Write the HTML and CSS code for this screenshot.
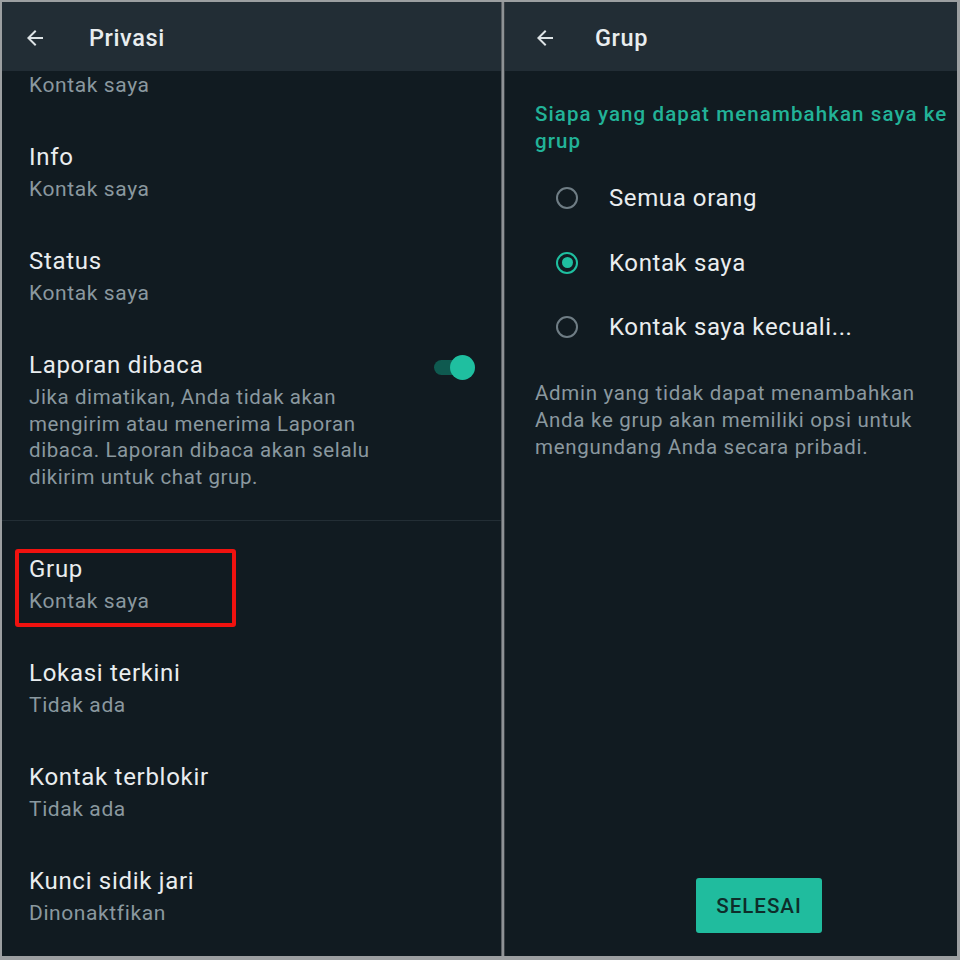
FILE: index.html
```html
<!DOCTYPE html>
<html lang="id">
<head>
    <meta charset="UTF-8">
    <meta name="viewport" content="width=device-width, initial-scale=1.0">
    <title>Privasi - Grup</title>
    <link rel="stylesheet" href="styles.css">
</head>
<body>
    <div class="frame">
        <!-- left screen: privacy list -->
        <section class="screen screen-left">
            <header class="app-bar">
                <svg class="back" viewBox="0 0 24 24" width="24" height="24"><path d="M20 11H7.83l5.59-5.59L12 4l-8 8 8 8 1.41-1.41L7.83 13H20v-2z"/></svg>
                <span class="app-title">Privasi</span>
            </header>
            <div class="list">
                <div class="item item-cut">
                    <div class="sub">Kontak saya</div>
                </div>
                <div class="item">
                    <div class="title">Info</div>
                    <div class="sub">Kontak saya</div>
                </div>
                <div class="item">
                    <div class="title">Status</div>
                    <div class="sub">Kontak saya</div>
                </div>
                <div class="item item-toggle">
                    <div class="item-text">
                        <div class="title">Laporan dibaca</div>
                        <div class="desc">Jika dimatikan, Anda tidak akan mengirim atau menerima Laporan dibaca. Laporan dibaca akan selalu dikirim untuk chat grup.</div>
                    </div>
                    <div class="switch"><span class="thumb"></span></div>
                </div>
                <div class="divider"></div>
                <div class="item item-first">
                    <div class="title">Grup</div>
                    <div class="sub">Kontak saya</div>
                    <div class="highlight"></div>
                </div>
                <div class="item">
                    <div class="title">Lokasi terkini</div>
                    <div class="sub">Tidak ada</div>
                </div>
                <div class="item">
                    <div class="title">Kontak terblokir</div>
                    <div class="sub">Tidak ada</div>
                </div>
                <div class="item">
                    <div class="title">Kunci sidik jari</div>
                    <div class="sub">Dinonaktfikan</div>
                </div>
            </div>
        </section>

        <div class="split"></div>

        <!-- right screen: group setting -->
        <section class="screen screen-right">
            <header class="app-bar">
                <svg class="back" viewBox="0 0 24 24" width="24" height="24"><path d="M20 11H7.83l5.59-5.59L12 4l-8 8 8 8 1.41-1.41L7.83 13H20v-2z"/></svg>
                <span class="app-title">Grup</span>
            </header>
            <div class="pane">
                <h2 class="question">Siapa yang dapat menambahkan saya ke grup</h2>
                <div class="options">
                    <div class="option"><span class="radio"></span>Semua orang</div>
                    <div class="option"><span class="radio checked"></span>Kontak saya</div>
                    <div class="option"><span class="radio"></span>Kontak saya kecuali...</div>
                </div>
                <p class="note">Admin yang tidak dapat menambahkan Anda ke grup akan memiliki opsi untuk mengundang Anda secara pribadi.</p>
                <div class="spacer"></div>
                <button class="done">SELESAI</button>
            </div>
        </section>
    </div>
</body>
</html>
```

FILE: styles.css
```css
* {
    box-sizing: border-box;
}

body {
    margin: 0;
    width: 960px;
    height: 960px;
    background: #9c9fa1;
    font-family: Roboto, 'Noto Sans', sans-serif;
    overflow: hidden;
}

.frame {
    display: flex;
    padding: 2px 3px 4px 2px;
    height: 960px;
}

.screen {
    display: flex;
    flex-direction: column;
    background: #111b21;
    height: 100%;
    overflow: hidden;
}

.screen-left {
    width: 499px;
}

.screen-right {
    flex: 1;
}

.split {
    width: 4px;
    background: #8e9295;
    border-left: 1px solid #5c6166;
    border-right: 1px solid #3a4045;
}

.app-bar {
    height: 69px;
    flex-shrink: 0;
    display: flex;
    align-items: center;
    background: #222d35;
    padding-left: 21px;
}

.back {
    fill: #dde3e6;
    margin-top: 2px;
}

.app-title {
    margin-left: 42px;
    font-size: 23.5px;
    font-weight: 500;
    letter-spacing: 0.6px;
    color: #e9edef;
    margin-top: 2px;
}

.screen-right .app-bar {
    padding-left: 28px;
}

.screen-right .app-title {
    margin-left: 38px;
}

/* left list */
.list {
    display: flex;
    flex-direction: column;
}

.item {
    position: relative;
    padding: 20px 28px 20px 27px;
}

.item-cut {
    padding-top: 0;
    padding-bottom: 22px;
}

.item-cut .sub {
    line-height: 28px;
}

.title {
    font-size: 24px;
    line-height: 32px;
    letter-spacing: 0.7px;
    color: #e9edef;
}

.sub {
    font-size: 21px;
    line-height: 32px;
    letter-spacing: 0.6px;
    color: #8a989f;
}

.item-toggle {
    display: flex;
    align-items: flex-start;
    gap: 30px;
    padding-bottom: 29px;
}

.item-text {
    flex: 1;
}

.desc {
    margin-top: 3px;
    font-size: 20.5px;
    line-height: 26.7px;
    letter-spacing: 0.6px;
    color: #8a989f;
}

.switch {
    position: relative;
    width: 38px;
    height: 15px;
    margin-top: 11px;
    margin-right: 1px;
    border-radius: 8px;
    background: #0f5a50;
}

.thumb {
    position: absolute;
    right: -3px;
    top: -5px;
    width: 25px;
    height: 25px;
    border-radius: 50%;
    background: #1fbfa0;
}

.divider {
    height: 1px;
    background: #232e35;
}

.item-first {
    padding-top: 32px;
}

.highlight {
    position: absolute;
    left: 13px;
    top: 28px;
    width: 221px;
    height: 78px;
    border: 4px solid #f0120f;
    border-radius: 3px;
}

/* right pane */
.pane {
    flex: 1;
    display: flex;
    flex-direction: column;
    padding: 30px 0 23px 30px;
}

.question {
    margin: 0;
    font-size: 20.5px;
    font-weight: 500;
    line-height: 27px;
    letter-spacing: 1.1px;
    color: #22b398;
}

.options {
    margin-top: 11px;
    display: flex;
    flex-direction: column;
}

.option {
    height: 64.5px;
    display: flex;
    align-items: center;
    font-size: 24px;
    letter-spacing: 0.6px;
    color: #e9edef;
}

.radio {
    width: 22px;
    height: 22px;
    margin-left: 21px;
    margin-right: 31px;
    border-radius: 50%;
    border: 2px solid #6f7d85;
    display: flex;
    align-items: center;
    justify-content: center;
}

.radio.checked {
    border-color: #1fbfa0;
}

.radio.checked::after {
    content: "";
    width: 11px;
    height: 11px;
    border-radius: 50%;
    background: #1fbfa0;
}

.note {
    margin: 20px 20px 0 0;
    font-size: 20.5px;
    line-height: 27px;
    letter-spacing: 0.7px;
    color: #8a989f;
}

.spacer {
    flex: 1;
}

.done {
    align-self: flex-start;
    margin-left: 161px;
    width: 126px;
    height: 55px;
    border: none;
    border-radius: 3px;
    background: #20bc9e;
    color: #0e2d2a;
    font-family: Roboto, sans-serif;
    font-size: 20.5px;
    font-weight: 500;
    letter-spacing: 1px;
}
```
